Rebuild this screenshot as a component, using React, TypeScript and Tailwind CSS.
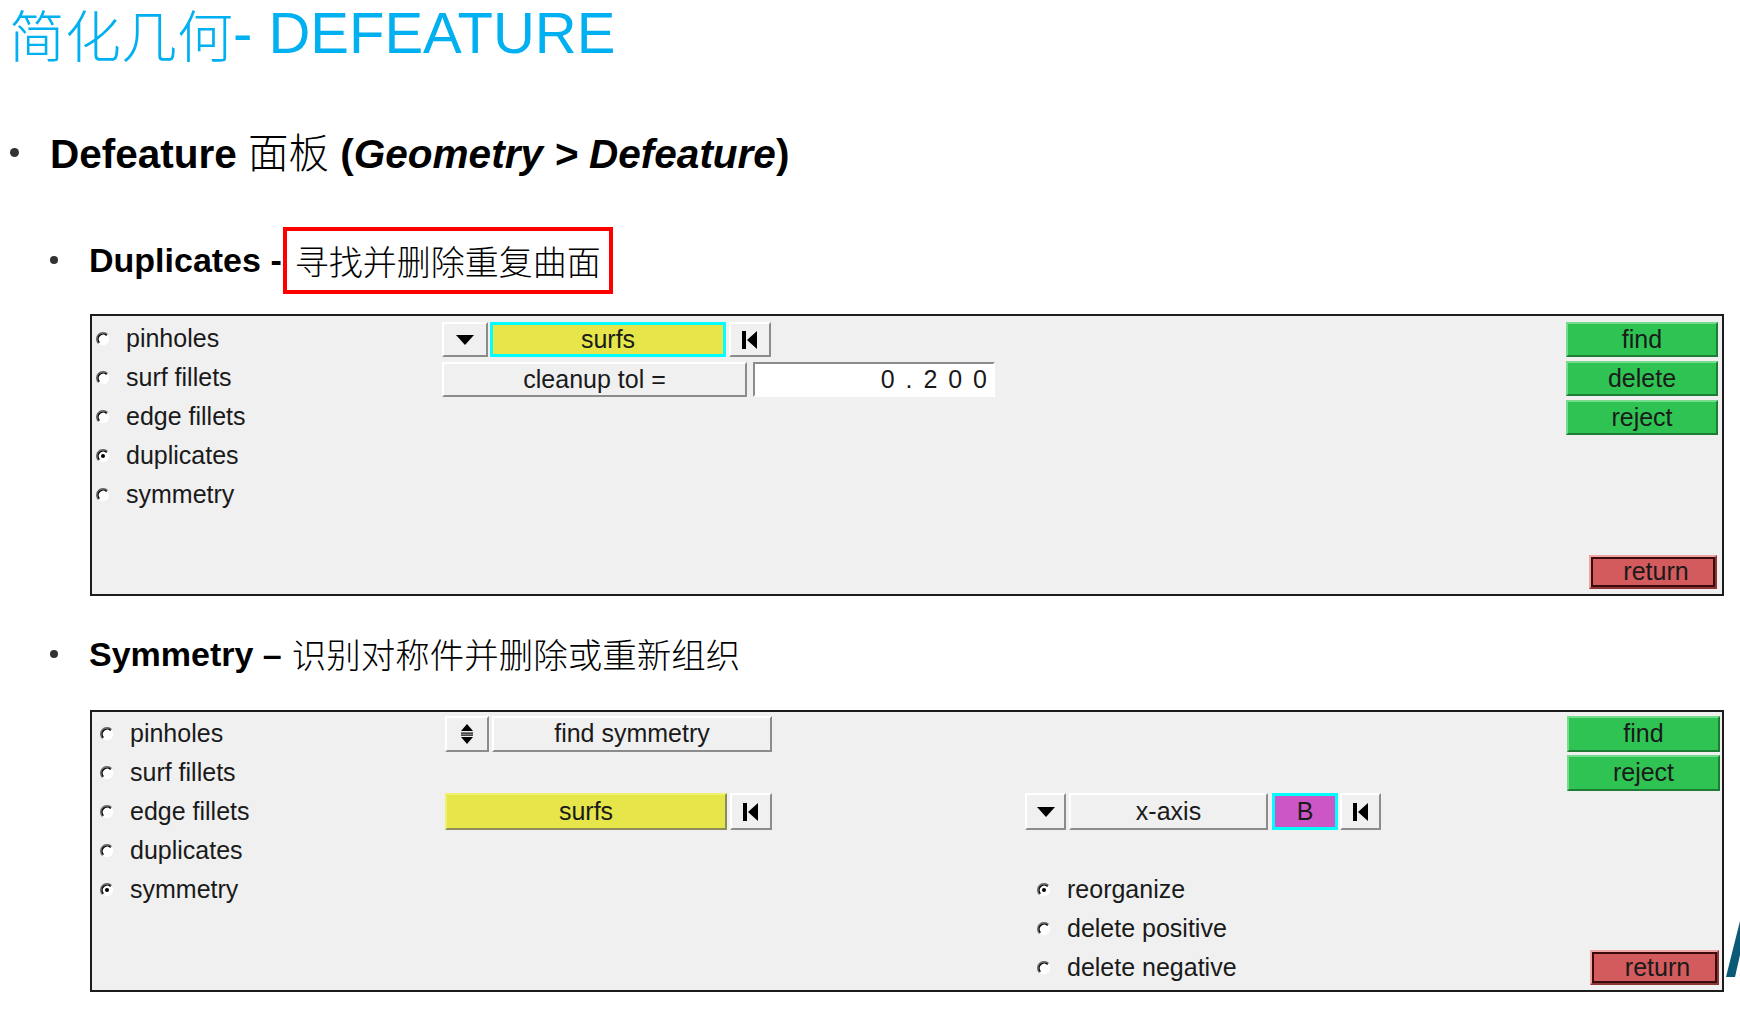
const RAISED =
  "border-2 border-t-white border-l-white border-b-[#8c8c8c] border-r-[#8c8c8c] bg-[#f0f0f0]";
const GREEN =
  "flex items-center justify-center border-2 border-t-[#74dc8c] border-l-[#74dc8c] border-b-[#1d7d35] border-r-[#1d7d35] bg-[#2fc353]";

const Radio = ({ checked = false }: { checked?: boolean }) => (
  <svg width="14" height="14" viewBox="0 0 14 14" className="shrink-0">
    <circle cx="7" cy="7" r="6.2" fill="#fff" />
    <path d="M11.4 2.6 A6.2 6.2 0 0 0 2.6 11.4" stroke="#6b6b6b" strokeWidth="1.6" fill="none" />
    <path d="M10.6 3.4 A5.1 5.1 0 0 0 3.4 10.6" stroke="#000" strokeWidth="1.4" fill="none" />
    {checked && <circle cx="7" cy="7" r="2" fill="#000" />}
  </svg>
);

const RadioRow = ({ label, checked }: { label: string; checked?: boolean }) => (
  <div className="flex h-[39px] items-center gap-[16px]">
    <Radio checked={checked} />
    <span>{label}</span>
  </div>
);

const DownArrow = () => (
  <svg width="18" height="10" viewBox="0 0 18 10">
    <polygon points="0,0 18,0 9,10" fill="#000" />
  </svg>
);

const FirstIcon = () => (
  <svg width="16" height="18" viewBox="0 0 16 18">
    <rect x="0" y="0" width="4" height="18" fill="#000" />
    <polygon points="5,9 15,0 15,18" fill="#000" />
  </svg>
);

const UpDown = () => (
  <svg width="12" height="20" viewBox="0 0 12 20">
    <polygon points="6,0 12,7 0,7" fill="#000" />
    <rect x="0" y="8.5" width="12" height="1.2" fill="#000" />
    <rect x="0" y="10.5" width="12" height="1.2" fill="#000" />
    <polygon points="0,13 12,13 6,20" fill="#000" />
  </svg>
);

const ReturnBtn = ({ className }: { className: string }) => (
  <div
    className={`border-2 border-t-[#f0a3a3] border-l-[#f0a3a3] border-b-[#8d3434] border-r-[#8d3434] bg-[#d35b5d] ${className}`}
  >
    <div className="flex h-full w-full items-center justify-center border-2 border-[#3a0b0b] pl-[6px]">
      return
    </div>
  </div>
);

const Bullet = ({ className }: { className: string }) => (
  <span className={`rounded-full bg-[#333] ${className}`} />
);

export default function App() {
  return (
    <div className="relative h-[1014px] w-[1740px] overflow-hidden bg-white font-['Liberation_Sans','Noto_Sans_CJK_SC',sans-serif] text-[#111]">
      {/* title */}
      <div className="mt-[2px] flex h-[62px] items-center whitespace-nowrap pl-[9px] text-[58px] leading-[62px] text-[#00b0f0]">
        <span className="font-['Noto_Sans_CJK_SC',sans-serif] text-[56px] font-light leading-[62px]">简化几何</span>
        <span>- DEFEATURE</span>
      </div>

      <div className="mt-[64px] flex h-[48px] items-center whitespace-nowrap">
        <Bullet className="ml-[10px] h-[9px] w-[9px]" />
        <span className="ml-[31px] text-[40.5px] font-bold leading-[48px] text-black">
          Defeature{" "}
          <span className="font-['Noto_Sans_CJK_SC',sans-serif] font-light">面板</span> (
          <i>Geometry &gt; Defeature</i>)
        </span>
      </div>

      <div className="mt-[50px] flex h-[68px] items-center whitespace-nowrap">
        <Bullet className="ml-[50px] h-[8px] w-[8px]" />
        <span className="ml-[31px] text-[34px] font-bold text-black">Duplicates -</span>
        <div className="ml-[1px] flex h-[67px] items-center border-4 border-[#ff0000] px-[8px]">
          <span className="font-['Noto_Sans_CJK_SC',sans-serif] text-[34px] font-light text-black">
            寻找并删除重复曲面
          </span>
        </div>
      </div>

      {/* duplicates panel */}
      <div className="ml-[90px] mt-[20px] flex h-[282px] w-[1634px] border-2 border-[#1c1c1c] bg-[#f0f0f0] text-[25px] text-[#1a1a1a]">
        <div className="w-[350px] shrink-0 pl-[4px] pt-[3px]">
          <RadioRow label="pinholes" />
          <RadioRow label="surf fillets" />
          <RadioRow label="edge fillets" />
          <RadioRow label="duplicates" checked />
          <RadioRow label="symmetry" />
        </div>
        <div className="flex flex-col gap-[5px] pt-[6px]">
          <div className="flex h-[35px]">
            <div className={`${RAISED} flex w-[46px] items-center justify-center`}>
              <DownArrow />
            </div>
            <div className="ml-[2px] flex w-[236px] items-center justify-center border-[3px] border-[#00ffff] bg-[#e6e64a]">
              surfs
            </div>
            <div className={`${RAISED} ml-[3px] flex w-[42px] items-center justify-center`}>
              <FirstIcon />
            </div>
          </div>
          <div className="flex h-[35px]">
            <div className={`${RAISED} flex w-[305px] items-center justify-center`}>cleanup tol =</div>
            <div className="ml-[6px] flex w-[242px] items-center justify-end border-2 border-t-[#8c8c8c] border-l-[#8c8c8c] border-b-white border-r-white bg-white pr-[4px] tracking-[2px]">
              0 . 2 0 0
            </div>
          </div>
        </div>
        <div className="flex-1" />
        <div className="flex h-full flex-col items-end justify-between pb-[5px] pr-[4px] pt-[6px]">
          <div className="flex flex-col gap-[4px]">
            <div className={`${GREEN} h-[35px] w-[152px]`}>find</div>
            <div className={`${GREEN} h-[35px] w-[152px]`}>delete</div>
            <div className={`${GREEN} h-[35px] w-[152px]`}>reject</div>
          </div>
          <ReturnBtn className="mr-[1px] h-[34px] w-[128px]" />
        </div>
      </div>

      <div className="mt-[34px] flex h-[48px] items-center whitespace-nowrap">
        <Bullet className="ml-[50px] h-[8px] w-[8px]" />
        <span className="ml-[31px] text-[34px] font-bold text-black">Symmetry – </span>
        <span className="ml-[10px] font-['Noto_Sans_CJK_SC',sans-serif] text-[34.5px] font-light text-black">
          识别对称件并删除或重新组织
        </span>
      </div>

      {/* symmetry panel */}
      <div className="mt-[32px] flex">
        <div className="ml-[90px] flex h-[282px] w-[1634px] border-2 border-[#1c1c1c] bg-[#f0f0f0] text-[25px] text-[#1a1a1a]">
          <div className="w-[353px] shrink-0 pl-[8px] pt-[2px]">
            <RadioRow label="pinholes" />
            <RadioRow label="surf fillets" />
            <RadioRow label="edge fillets" />
            <RadioRow label="duplicates" />
            <RadioRow label="symmetry" checked />
          </div>
          <div className="w-[327px] shrink-0 pt-[4px]">
            <div className="flex h-[36px]">
              <div className={`${RAISED} flex w-[44px] items-center justify-center`}>
                <UpDown />
              </div>
              <div className={`${RAISED} ml-[3px] flex w-[280px] items-center justify-center`}>find symmetry</div>
            </div>
            <div className="mt-[41px] flex h-[37px]">
              <div className="flex w-[282px] items-center justify-center border-2 border-t-[#f0f070] border-l-[#f0f070] border-b-[#8c8c5a] border-r-[#8c8c5a] bg-[#e6e64a]">
                surfs
              </div>
              <div className={`${RAISED} ml-[3px] flex w-[42px] items-center justify-center`}>
                <FirstIcon />
              </div>
            </div>
          </div>
          <div className="ml-[253px] pt-[81px]">
            <div className="flex h-[37px]">
              <div className={`${RAISED} flex w-[41px] items-center justify-center`}>
                <DownArrow />
              </div>
              <div className={`${RAISED} ml-[3px] flex w-[199px] items-center justify-center`}>x-axis</div>
              <div className="ml-[4px] flex w-[66px] items-center justify-center border-[3px] border-[#00ffff] bg-[#cc56c6]">
                B
              </div>
              <div className={`${RAISED} ml-[2px] flex w-[41px] items-center justify-center`}>
                <FirstIcon />
              </div>
            </div>
            <div className="mt-[40px] pl-[12px]">
              <RadioRow label="reorganize" checked />
              <RadioRow label="delete positive" />
              <RadioRow label="delete negative" />
            </div>
          </div>
          <div className="flex-1" />
          <div className="flex h-full flex-col items-end justify-between pb-[5px] pr-[2px] pt-[4px]">
            <div className="flex flex-col gap-[3px]">
              <div className={`${GREEN} h-[36px] w-[153px]`}>find</div>
              <div className={`${GREEN} h-[36px] w-[153px]`}>reject</div>
            </div>
            <ReturnBtn className="mr-[1px] h-[35px] w-[129px]" />
          </div>
        </div>
        <svg width="16" height="282" viewBox="0 0 16 282" className="shrink-0">
          <polygon points="2,267 11,267 16,245 16,211" fill="#0b5877" />
        </svg>
      </div>
    </div>
  );
}
